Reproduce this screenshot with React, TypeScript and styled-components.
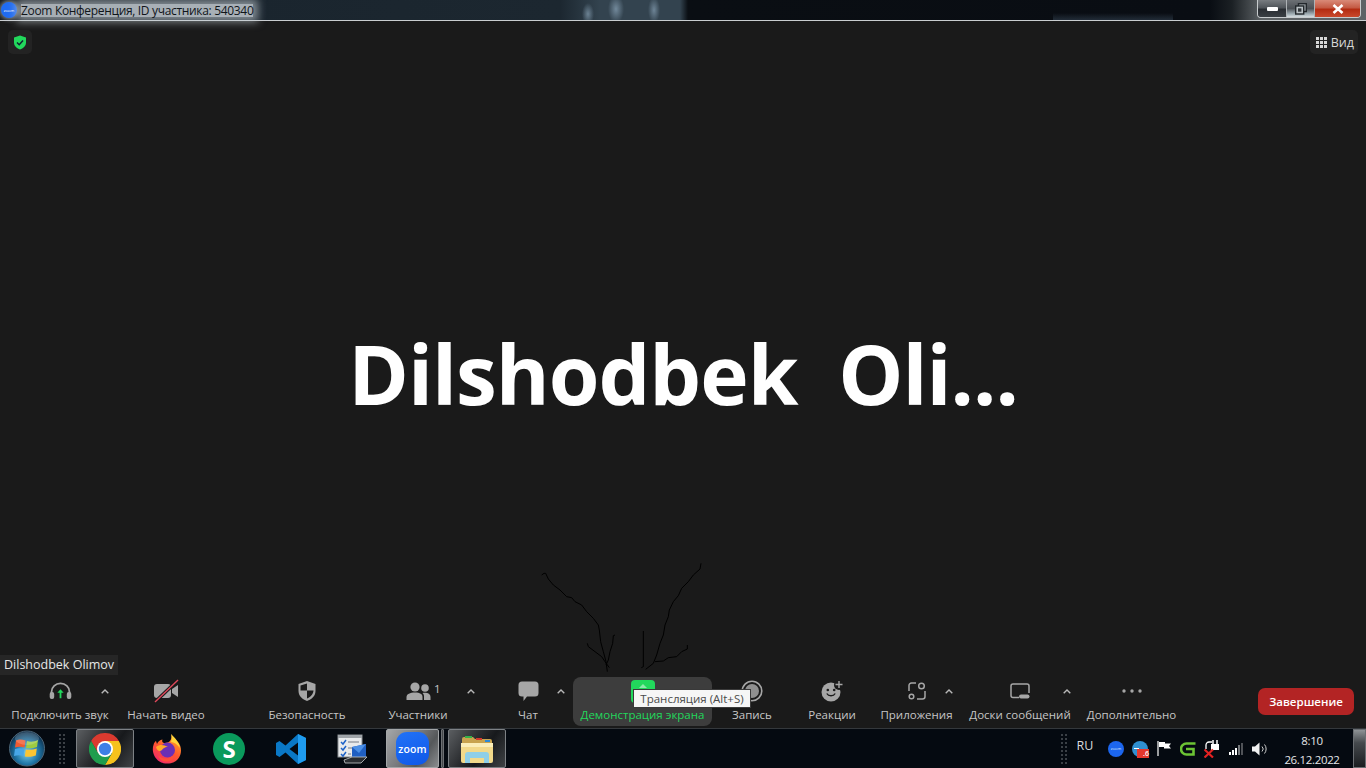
import React from 'react';
import styled, { createGlobalStyle, css } from 'styled-components';

const GRAY = '#a6a6a6';
const GREEN = '#22d85c';

const GlobalStyle = createGlobalStyle`
  html, body {
    margin: 0;
    height: 100%;
    overflow: hidden;
    background: #1a1a1a;
    font-family: "Open Sans", "Noto Sans", sans-serif;
  }
  #root { height: 100%; }
  svg { display: block; }
`;

const Page = styled.div`
  height: 100vh;
  display: flex;
  flex-direction: column;
`;

const TitleBar = styled.div`
  height: 20px;
  flex: none;
  display: flex;
  align-items: flex-start;
  justify-content: space-between;
  padding-right: 5px;
  border-bottom: 1px solid #c9cdd0;
  background:
    radial-gradient(ellipse 6px 11px at 588px 14px, rgba(135, 160, 180, 0.7), transparent),
    radial-gradient(ellipse 8px 14px at 616px 9px, rgba(135, 160, 180, 0.75), transparent),
    radial-gradient(ellipse 6px 13px at 654px 10px, rgba(135, 160, 180, 0.7), transparent),
    linear-gradient(180deg, transparent 13px, rgba(70, 90, 110, 0.4) 20px) 1053px 0 / 120px 100% no-repeat,
    linear-gradient(90deg,
      #10161c 0, #1a252e 240px, #1c2730 560px, #33434f 600px, #33434f 680px, #0a0e13 688px,
      #090d13 1210px, #1b2024 1232px, #5e6366 1262px);
`;

const WindowTitle = styled.div`
  display: flex;
  align-items: center;
  gap: 4px;
  height: 20px;
  padding-left: 1px;
`;

const AppBadge = styled.div`
  width: 16px;
  height: 16px;
  border-radius: 50%;
  background: #1f6bf2;
  box-shadow: 0 0 4px 2px rgba(200, 208, 214, 0.55);
  color: #fff;
  font-size: 4px;
  display: flex;
  align-items: center;
  justify-content: center;
`;

const TitleText = styled.span`
  font-size: 12px;
  letter-spacing: -0.027em;
  color: #10151a;
  white-space: nowrap;
  line-height: 13px;
  background: rgba(200, 208, 214, 0.82);
  box-shadow: 0 0 9px 5px rgba(200, 208, 214, 0.6);
`;

const WindowControls = styled.div`
  display: flex;
  height: 17px;
  border: 1px solid #c8ccce;
  border-top: none;
  border-radius: 0 0 4px 4px;
  overflow: hidden;
`;

const WinButton = styled.div<{ $w: number; $kind?: 'close' | 'restore' }>`
  width: ${(p) => p.$w}px;
  display: flex;
  align-items: center;
  justify-content: center;
  background: linear-gradient(180deg, #787c80 0, #50555a 45%, #2a2e33 55%, #3a3f44 100%);
  border-right: 1px solid #aeb2b5;
  ${(p) =>
    p.$kind === 'restore' &&
    css`
      background: linear-gradient(180deg, #6c7074 0, #4c5156 50%, #9aa7ad 80%, #d5dde0 100%);
    `}
  ${(p) =>
    p.$kind === 'close' &&
    css`
      border-right: none;
      background: linear-gradient(180deg, #d98a78 0, #c45a44 45%, #b32c12 55%, #c9492c 100%);
    `}
`;

const Stage = styled.main`
  flex: 1;
  position: relative;
  display: flex;
  align-items: center;
  justify-content: center;
  padding-top: 48px;
  box-sizing: border-box;
  min-height: 0;
`;

const BigName = styled.h1`
  margin: 0;
  font-family: "Open Sans", sans-serif;
  font-size: 82px;
  font-weight: 700;
  color: #fff;
  white-space: pre;
  line-height: 1;
  letter-spacing: -0.012em;
`;

const CornerTile = styled.div<{ $side: 'left' | 'right' }>`
  position: absolute;
  top: 9px;
  ${(p) =>
    p.$side === 'left'
      ? 'left: 8px; width: 24px; justify-content: center;'
      : 'right: 8px; width: 48px; justify-content: flex-end; padding-right: 4px; box-sizing: border-box;'}
  height: 24px;
  border-radius: 5px;
  background: #232323;
  display: flex;
  align-items: center;
  gap: 4px;
  color: #d8d8d8;
  font-size: 12.5px;
`;

const NameTag = styled.div`
  position: absolute;
  left: 0;
  bottom: 2px;
  height: 20px;
  width: 118px;
  box-sizing: border-box;
  padding-left: 4px;
  background: #262626;
  color: #e6e6e6;
  font-size: 12.5px;
  line-height: 20px;
  white-space: nowrap;
`;

const Scribble = styled.svg`
  position: absolute;
  left: 530px;
  top: 534px;
`;

const Toolbar = styled.nav`
  flex: none;
  height: 51px;
  display: flex;
  padding-left: 10px;
  position: relative;
`;

const Tool = styled.div<{ $w: number; $ml: number; $active?: boolean }>`
  position: relative;
  flex: none;
  box-sizing: border-box;
  width: ${(p) => p.$w}px;
  margin-left: ${(p) => p.$ml}px;
  height: 49px;
  display: flex;
  flex-direction: column;
  align-items: center;
  border-radius: 8px;
  color: ${(p) => (p.$active ? GREEN : '#c6c6c6')};
  background: ${(p) => (p.$active ? '#3d3d3d' : 'transparent')};
`;

const IconSlot = styled.div`
  height: 28px;
  display: flex;
  align-items: center;
  justify-content: center;
  position: relative;
`;

const ToolLabel = styled.span`
  font-size: 11.5px;
  line-height: 16px;
  margin-top: 2px;
  white-space: nowrap;
`;

const Caret = styled.svg<{ $x: number }>`
  position: absolute;
  left: ${(p) => p.$x}px;
  top: 12px;
`;

const Count = styled.span`
  position: absolute;
  left: 45px;
  top: 4px;
  font-size: 11.5px;
  color: #c6c6c6;
`;

const Tooltip = styled.div`
  position: absolute;
  left: 60px;
  top: 12px;
  width: 118px;
  height: 19px;
  box-sizing: border-box;
  background: #f6f6f6;
  border: 1px solid #3a3a3a;
  color: #4a4a4a;
  font-size: 11.5px;
  line-height: 17px;
  text-align: center;
  white-space: nowrap;
  z-index: 2;
`;

const EndButton = styled.button`
  margin-left: auto;
  margin-right: 12px;
  margin-top: 11px;
  width: 96px;
  height: 27px;
  border: none;
  border-radius: 7px;
  background: #b32424;
  color: #fff;
  font-family: inherit;
  font-size: 11.5px;
  font-weight: 600;
  padding: 0;
`;

const Taskbar = styled.footer`
  flex: none;
  height: 40px;
  box-sizing: border-box;
  border-top: 1px solid #34383c;
  background: #050a11;
  display: flex;
  align-items: stretch;
  padding-left: 9px;
`;

const Orb = styled.div`
  width: 36px;
  display: flex;
  align-items: center;
`;

const Gripper = styled.div<{ $ml: number }>`
  width: 8px;
  margin: 4px 0 4px ${(p) => p.$ml}px;
  background-image: radial-gradient(circle, #3b4046 0.8px, transparent 1px);
  background-size: 4px 4px;
`;

const TaskSlot = styled.div<{ $w: number; $ml?: number; $state?: 'open' | 'bright' }>`
  width: ${(p) => p.$w}px;
  margin-left: ${(p) => p.$ml ?? 0}px;
  box-sizing: border-box;
  display: flex;
  align-items: center;
  justify-content: center;
  ${(p) =>
    p.$state === 'open' &&
    css`
      border: 1px solid #7d8185;
      border-radius: 2px;
      background: linear-gradient(125deg, #5b5e61 0, #2b2d30 40%, #17191c 60%, #3f4245 100%);
    `}
  ${(p) =>
    p.$state === 'bright' &&
    css`
      border: 1px solid #a3a6a8;
      border-radius: 2px;
      background: linear-gradient(125deg, #a5a7a9 0, #77797c 45%, #55585a 70%, #8b8d8f 100%);
    `}
`;

const Sliver = styled.div`
  width: 3px;
  margin-left: 2px;
  border: 1px solid #6d7074;
  border-radius: 1px;
  background: #44474a;
  box-sizing: border-box;
`;

const ZoomTile = styled.div`
  width: 33px;
  height: 33px;
  border-radius: 11px;
  background: linear-gradient(160deg, #2272f7, #0f58e8);
  color: #fff;
  font-size: 10.5px;
  font-weight: 600;
  letter-spacing: 0.2px;
  display: flex;
  align-items: center;
  justify-content: center;
`;

const STile = styled.div`
  width: 32px;
  height: 32px;
  border-radius: 50%;
  background: #0a9a5c;
  color: #fff;
  font-size: 24px;
  font-weight: 700;
  line-height: 32px;
  text-align: center;
`;

const Tray = styled.div`
  margin-left: auto;
  display: flex;
  align-items: stretch;
`;

const Lang = styled.div`
  width: 24px;
  margin-left: 5px;
  text-align: center;
  color: #d8dadc;
  font-size: 12.5px;
  line-height: 34px;
`;

const TrayCell = styled.div<{ $first?: boolean }>`
  width: 24px;
  margin-left: ${(p) => (p.$first ? 7 : 0)}px;
  display: flex;
  align-items: center;
  justify-content: center;
  position: relative;
`;

const TrayZoom = styled.div`
  width: 16px;
  height: 16px;
  border-radius: 50%;
  background: #1c66ee;
  color: #dfe9ff;
  font-size: 4px;
  display: flex;
  align-items: center;
  justify-content: center;
`;

const TrayBlue = styled.div`
  width: 16px;
  height: 16px;
  border-radius: 50%;
  background: #2f8fd0;
  display: flex;
  align-items: center;

  &::before {
    content: '';
    width: 5px;
    height: 1px;
    margin-left: 2px;
    background: #fff;
  }
`;

const RedBadge = styled.span`
  position: absolute;
  right: 3px;
  bottom: 10px;
  width: 12px;
  height: 9px;
  background: #e5372c;
  color: #fff;
  font-size: 7px;
  line-height: 9px;
  text-align: right;
  font-weight: 600;
`;

const Clock = styled.div`
  width: 80px;
  box-sizing: border-box;
  padding-top: 2px;
  display: flex;
  flex-direction: column;
  align-items: center;
  justify-content: center;
  gap: 4px;
  color: #e4e6e8;
  font-size: 11.5px;
  line-height: 15px;
  letter-spacing: -0.03em;
`;

const ShowDesktop = styled.div`
  width: 13px;
  margin-left: 1px;
  box-sizing: border-box;
  border: 1px solid #6a6e72;
  background: linear-gradient(180deg, #8f9396 0, #45494d 35%, #1a1d20 100%);
`;

const CaretUp = ({ x }: { x: number }) => (
  <Caret $x={x} width="8" height="5" viewBox="0 0 8 5" fill="none" stroke="#b8b8b8" strokeWidth="1.4">
    <polyline points="0.7,4.3 4,1 7.3,4.3" />
  </Caret>
);

const AudioIcon = () => (
  <svg width="25" height="18" viewBox="0 0 26 20">
    <path d="M3 14 V11 A10 9.5 0 0 1 23 11 V14" fill="none" stroke={GRAY} strokeWidth="2" />
    <rect x="1" y="11" width="5" height="8" rx="2.2" fill={GRAY} />
    <rect x="20" y="11" width="5" height="8" rx="2.2" fill={GRAY} />
    <path d="M13 8 L16.5 12 H14 V18 H12 V12 H9.5 Z" fill={GREEN} />
  </svg>
);

const VideoOffIcon = () => (
  <svg width="26" height="24" viewBox="0 0 26 24">
    <rect x="1" y="5" width="17" height="14" rx="3" fill={GRAY} />
    <path d="M19 10 L25 6 V18 L19 14 Z" fill={GRAY} />
    <path d="M2 23 L25 1" stroke="#1a1a1a" strokeWidth="3.4" />
    <path d="M2 23 L25 1" stroke="#e0485a" strokeWidth="1.4" />
  </svg>
);

const SecurityIcon = () => (
  <svg width="20" height="22" viewBox="0 0 20 22">
    <path d="M10 1 L18.5 4 V11 C18.5 16 14.5 19.5 10 21 C5.5 19.5 1.5 16 1.5 11 V4 Z" fill={GRAY} />
    <path d="M10 3.5 V10.5 H3.5 V5.5 Z M10 10.5 H16.5 C16.2 14.5 13.2 17.2 10 18.5 Z" fill="#1a1a1a" />
  </svg>
);

const PeopleIcon = () => (
  <svg width="25" height="18" viewBox="0 0 25 18">
    <circle cx="9" cy="5" r="4.6" fill={GRAY} />
    <circle cx="19" cy="6" r="3.8" fill={GRAY} />
    <path d="M0.5 18 V15 C0.5 12 4 10.5 9 10.5 C14 10.5 16.5 12 16.5 15 V18 Z" fill={GRAY} />
    <path d="M18 18 V14.5 C18 13 17.5 12 16.5 11 C21 10.3 24.5 11.7 24.5 15 V18 Z" fill={GRAY} />
  </svg>
);

const ChatIcon = () => (
  <svg width="21" height="21" viewBox="0 0 21 21">
    <path d="M4 0.5 H17 A3.5 3.5 0 0 1 20.5 4 V12 A3.5 3.5 0 0 1 17 15.5 H9 L5.5 20 V15.5 H4 A3.5 3.5 0 0 1 0.5 12 V4 A3.5 3.5 0 0 1 4 0.5 Z" fill={GRAY} />
  </svg>
);

const ShareIcon = () => (
  <svg width="24" height="23" viewBox="0 0 24 23">
    <rect width="24" height="23" rx="4" fill={GREEN} />
    <path d="M12 4 L16 8 H8 Z" fill="#8be9a9" />
  </svg>
);

const RecordIcon = () => (
  <svg width="22" height="22" viewBox="0 0 22 22">
    <circle cx="11" cy="11" r="9.8" fill="none" stroke={GRAY} strokeWidth="1.6" />
    <circle cx="11" cy="11" r="7" fill="#8f8f8f" />
  </svg>
);

const ReactionIcon = () => (
  <svg width="23" height="22" viewBox="0 0 23 22">
    <circle cx="10" cy="12" r="9.5" fill={GRAY} />
    <circle cx="6.8" cy="10" r="1.3" fill="#1a1a1a" />
    <circle cx="13.2" cy="10" r="1.3" fill="#1a1a1a" />
    <path d="M5.8 13.5 C7.5 16.5 12.5 16.5 14.2 13.5" fill="none" stroke="#1a1a1a" strokeWidth="1.4" />
    <circle cx="18" cy="5" r="5" fill="#1a1a1a" />
    <path d="M18 1 V8 M14.5 4.5 H21.5" stroke={GRAY} strokeWidth="1.4" />
  </svg>
);

const AppsIcon = () => (
  <svg width="18" height="18" viewBox="0 0 18 18" fill="none" stroke={GRAY} strokeWidth="1.5">
    <path d="M8 1 H3.5 A2.5 2.5 0 0 0 1 3.5 V9" />
    <path d="M17 9 V14.5 A2.5 2.5 0 0 1 14.5 17 H9" />
    <circle cx="13.5" cy="4" r="2.8" />
    <circle cx="3.5" cy="14.5" r="2.3" />
  </svg>
);

const BoardIcon = () => (
  <svg width="20" height="17" viewBox="0 0 20 17">
    <path d="M9 14.5 H3 A2 2 0 0 1 1 12.5 V3 A2 2 0 0 1 3 1 H17 A2 2 0 0 1 19 3 V10" fill="none" stroke={GRAY} strokeWidth="1.5" />
    <rect x="9" y="11.5" width="10.5" height="4" rx="2" fill={GRAY} />
  </svg>
);

const MoreIcon = () => (
  <svg width="20" height="4" viewBox="0 0 20 4" fill={GRAY}>
    <circle cx="2" cy="2" r="1.7" />
    <circle cx="10" cy="2" r="1.7" />
    <circle cx="18" cy="2" r="1.7" />
  </svg>
);

const WindowsOrb = () => (
  <svg width="37" height="37" viewBox="0 0 36 36">
    <defs>
      <radialGradient id="orb" cx="50%" cy="62%" r="60%">
        <stop offset="0" stopColor="#7ed0ee" />
        <stop offset="0.55" stopColor="#1f75a6" />
        <stop offset="1" stopColor="#0c2c48" />
      </radialGradient>
    </defs>
    <circle cx="18" cy="18" r="17.5" fill="url(#orb)" stroke="#4d6678" />
    <path d="M7 10 C10 8.5 13 9 16.5 10 L15.5 17 C12.5 16 9.5 15.7 6 17 Z" fill="#ef5a30" />
    <path d="M18 10.5 C21 11.5 25 11.5 29 9.5 L28 16.5 C24 18 20 18 17 17.5 Z" fill="#9ccb42" />
    <path d="M6 18.5 C9.5 17.2 12.5 17.5 15.2 18.5 L14.2 25.5 C11.5 24.5 8.5 24.3 5 25.5 Z" fill="#47a6e8" />
    <path d="M16.8 19 C20 19.6 24 19.5 27.8 18 L26.8 25 C23 26.5 19 26.5 15.8 26 Z" fill="#fbc533" />
    <ellipse cx="18" cy="8" rx="12" ry="6.5" fill="#fff" opacity="0.18" />
  </svg>
);

const ChromeLogo = () => (
  <svg width="32" height="32" viewBox="-16 -16 32 32">
    <path d="M13.86,-8 A16,16 0 0 0 -13.86,-8 L-6.93,4 L0,0 L0,-8 Z" fill="#db3a2f" />
    <path d="M13.86,-8 A16,16 0 0 0 -13.86,-8 L-6.93,4 L0,0 L0,-8 Z" fill="#f6c21c" transform="rotate(120)" />
    <path d="M13.86,-8 A16,16 0 0 0 -13.86,-8 L-6.93,4 L0,0 L0,-8 Z" fill="#1f9d4d" transform="rotate(240)" />
    <circle r="8" fill="#fff" />
    <circle r="6.2" fill="#3d7fe6" />
  </svg>
);

const FirefoxLogo = () => (
  <svg width="32" height="32" viewBox="0 0 32 32">
    <defs>
      <linearGradient id="fox" x1="0.8" y1="0" x2="0.2" y2="1">
        <stop offset="0" stopColor="#ffb02a" />
        <stop offset="0.5" stopColor="#ff5a2c" />
        <stop offset="1" stopColor="#f0246e" />
      </linearGradient>
    </defs>
    <path d="M20 1 C21 4 24 6 27 9 C31 14 31 21 27 26 C23 31 14 32 8.5 28.5 C3 25 0.5 18 2.5 12 C3 10 4 8.5 5 8 L6 11 C7 8.5 9 7 11.5 6.5 C10.5 9 12 10 14 10 C19 10 21.5 6 20 1 Z" fill="url(#fox)" />
    <path d="M20 1 C24 5 28 9 29 15 C26 11 23 9 20 9 C21 6 21 3 20 1 Z" fill="#ffd43a" />
    <circle cx="16.5" cy="17" r="7.5" fill="#6b2fb5" />
    <path d="M5 14 C9 11 13 12 17 14 C13 14 12 16 11 17 C9 19 6 18 5 14 Z" fill="#ffa928" />
    <path d="M7 22 C11 27 20 27 24 20 C24 27 17 30 12 28 C9 27 8 25 7 22 Z" fill="#ff4f3a" />
  </svg>
);

const VSCodeLogo = () => (
  <svg width="32" height="32" viewBox="0 0 32 32">
    <path fillRule="evenodd" d="M23 1 L31 5 V27 L23 31 L10.5 19.5 L4.5 24 L1 22 V10 L4.5 8 L10.5 12.5 Z M23 9.5 L14.5 16 L23 22.5 Z" fill="#0a78c6" />
    <path d="M23 1 L31 5 V27 L23 31 Z" fill="#1f9cf0" />
  </svg>
);

const TasksIcon = () => (
  <svg width="32" height="32" viewBox="0 0 32 32">
    <rect x="1" y="2" width="24" height="22" fill="#e8eaec" stroke="#8b8f94" />
    <rect x="1" y="2" width="24" height="3" fill="#9ea3a8" />
    <path d="M4 9 L6 11 L9 7 M4 15 L6 17 L9 13 M4 21 L6 23 L9 19" fill="none" stroke="#1e62c8" strokeWidth="1.5" />
    <path d="M11 9 H22 M11 15 H16 M11 21 H14" stroke="#9aa0a6" strokeWidth="1.5" />
    <path d="M15 14 L29 11 V24 L15 27 Z" fill="#1f5fc2" />
    <path d="M15 14 L29 11 L22 20 Z" fill="#4b8fe6" />
    <path d="M7 27 L15 24 L30 24 L24 30 H8 Z" fill="#2a2d31" stroke="#c7cacc" strokeWidth="0.8" />
  </svg>
);

const FolderIcon = () => (
  <svg width="34" height="30" viewBox="0 0 34 30">
    <path d="M2 5 A2 2 0 0 1 4 3 H13 L15 5 H30 A2 2 0 0 1 32 7 V10 H2 Z" fill="#c8a34e" />
    <rect x="5" y="2" width="7" height="2" fill="#35b04a" />
    <rect x="16" y="4" width="6" height="2" fill="#d33a2c" />
    <rect x="25" y="6" width="5" height="2" fill="#2d8ad6" />
    <rect x="1" y="9" width="32" height="20" rx="2" fill="#f2d98a" />
    <path d="M1 9 H33 V13 H1 Z" fill="#fbeeb8" />
    <path d="M5 29 V21 A3 3 0 0 1 8 18 H26 A3 3 0 0 1 29 21 V29 H24 V24 H10 V29 Z" fill="#8fcfe8" />
  </svg>
);

const FlagIcon = () => (
  <svg width="14" height="15" viewBox="0 0 14 15">
    <path d="M1 0 V15" stroke="#fff" strokeWidth="1.2" />
    <path d="M2 1 H8 V2.5 H14 L12 5 L14 7.5 H7 V6 H2 Z" fill="#fff" />
  </svg>
);

const GIcon = () => (
  <svg width="16" height="14" viewBox="0 0 16 14" fill="none" stroke="#6cc434" strokeWidth="2.6">
    <path d="M15.5 1.5 H6.5 A5 5 0 0 0 6.5 12.5 H13.5 V7 H6" />
  </svg>
);

const PlugIcon = () => (
  <svg width="16" height="18" viewBox="0 0 16 18">
    <path d="M2 9 V5 A3 3 0 0 1 5 2 H8" fill="none" stroke="#fff" strokeWidth="1.3" />
    <rect x="7" y="4" width="8" height="6" fill="#fff" />
    <path d="M9 0 V4 M13 0 V4" stroke="#fff" strokeWidth="1.5" />
    <path d="M0.5 9.5 L9 17.5 M9 9.5 L0.5 17.5" stroke="#e32222" strokeWidth="2.2" />
  </svg>
);

const SignalIcon = () => (
  <svg width="14" height="12" viewBox="0 0 14 12" fill="#fff">
    <rect x="0" y="9" width="2" height="3" />
    <rect x="3" y="7" width="2" height="5" />
    <rect x="6" y="5" width="2" height="7" />
    <rect x="9" y="2" width="2" height="10" opacity="0.45" />
    <rect x="12" y="0" width="2" height="12" opacity="0.3" />
  </svg>
);

const SpeakerIcon = () => (
  <svg width="16" height="14" viewBox="0 0 16 14">
    <path d="M0 4.5 H3 L7.5 0.5 V13.5 L3 9.5 H0 Z" fill="#f2f2f2" />
    <path d="M10 4.5 A3.5 3.5 0 0 1 10 9.5 M12.5 2.5 A7 7 0 0 1 12.5 11.5" fill="none" stroke="#d0d0d0" strokeWidth="1" />
  </svg>
);

const scribbles = [
  '35,60 42,55 47,55 55,72 70,90 90,105 110,125 125,128 135,140 155,150 170,170 190,190 205,210 208,225 212,260 220,290 228,320 232,350',
  '172,265 175,275 195,290 215,305 225,320 238,338',
  '255,240 250,242 248,265 240,290 235,315 228,330',
  '340,228 340,335 334,338',
  '513,25 510,42 490,60 475,80 455,100 445,122 430,140 418,165 415,185 405,210 400,240 390,265 380,300 370,325 347,343',
  '472,270 472,282 455,290 440,305 415,308 400,318 375,320',
];

export default function App() {
  return (
    <Page>
      <GlobalStyle />
      <TitleBar>
        <WindowTitle>
          <AppBadge>zoom</AppBadge>
          <TitleText>Zoom Конференция, ID участника: 540340</TitleText>
        </WindowTitle>
        <WindowControls>
          <WinButton $w={28}>
            <svg width="11" height="4" viewBox="0 0 11 4">
              <rect width="11" height="4" rx="1" fill="#fff" />
            </svg>
          </WinButton>
          <WinButton $w={27} $kind="restore">
            <svg width="12" height="12" viewBox="0 0 12 12" fill="none" stroke="#23282c" strokeWidth="1.4">
              <rect x="3.5" y="0.7" width="7.8" height="7.8" fill="#9da4a8" />
              <rect x="0.7" y="3" width="8" height="8" fill="#b9c0c4" />
              <rect x="3" y="5.3" width="3.4" height="3.4" fill="#34393d" stroke="none" />
            </svg>
          </WinButton>
          <WinButton $w={45} $kind="close">
            <svg width="12" height="10" viewBox="0 0 12 10">
              <path d="M1.5 1 L10.5 9 M10.5 1 L1.5 9" stroke="#fff" strokeWidth="2.6" />
            </svg>
          </WinButton>
        </WindowControls>
      </TitleBar>

      <Stage>
        <CornerTile $side="left">
          <svg width="14" height="15" viewBox="0 0 14 15">
            <path d="M7 0.5 L13 2.5 V7.5 C13 11 10 13.5 7 14.5 C4 13.5 1 11 1 7.5 V2.5 Z" fill={GREEN} />
            <path d="M4 7.5 L6.2 9.7 L10 5.5" fill="none" stroke="#123" strokeWidth="1.5" />
          </svg>
        </CornerTile>
        <CornerTile $side="right">
          <svg width="11" height="11" viewBox="0 0 11 11" fill="#d8d8d8">
            {[0, 4, 8].map((y) =>
              [0, 4, 8].map((x) => <rect key={`${x}-${y}`} x={x} y={y} width="3" height="3" />),
            )}
          </svg>
          <span>Вид</span>
        </CornerTile>
        <BigName>{'Dilshodbek  Oli...'}</BigName>
        <Scribble width="190" height="125" viewBox="0 0 570 375" fill="none" stroke="#000" strokeWidth="3">
          {scribbles.map((pts) => (
            <polyline key={pts} points={pts} />
          ))}
        </Scribble>
        <NameTag>Dilshodbek Olimov</NameTag>
      </Stage>

      <Toolbar>
        <Tool $w={100} $ml={0}>
          <IconSlot><AudioIcon /></IconSlot>
          <ToolLabel>Подключить звук</ToolLabel>
          <CaretUp x={91} />
        </Tool>
        <Tool $w={76} $ml={18}>
          <IconSlot><VideoOffIcon /></IconSlot>
          <ToolLabel>Начать видео</ToolLabel>
        </Tool>
        <Tool $w={76} $ml={65}>
          <IconSlot><SecurityIcon /></IconSlot>
          <ToolLabel>Безопасность</ToolLabel>
        </Tool>
        <Tool $w={58} $ml={44}>
          <IconSlot><PeopleIcon /></IconSlot>
          <ToolLabel>Участники</ToolLabel>
          <Count>1</Count>
          <CaretUp x={78} />
        </Tool>
        <Tool $w={20} $ml={71}>
          <IconSlot><ChatIcon /></IconSlot>
          <ToolLabel>Чат</ToolLabel>
          <CaretUp x={39} />
        </Tool>
        <Tool $w={139} $ml={35} $active>
          <IconSlot><ShareIcon /></IconSlot>
          <ToolLabel>Демонстрация экрана</ToolLabel>
          <Tooltip>Трансляция (Alt+S)</Tooltip>
        </Tool>
        <Tool $w={40} $ml={20}>
          <IconSlot><RecordIcon /></IconSlot>
          <ToolLabel>Запись</ToolLabel>
        </Tool>
        <Tool $w={46} $ml={37}>
          <IconSlot><ReactionIcon /></IconSlot>
          <ToolLabel>Реакции</ToolLabel>
        </Tool>
        <Tool $w={73} $ml={25}>
          <IconSlot><AppsIcon /></IconSlot>
          <ToolLabel>Приложения</ToolLabel>
          <CaretUp x={65} />
        </Tool>
        <Tool $w={102} $ml={16}>
          <IconSlot><BoardIcon /></IconSlot>
          <ToolLabel>Доски сообщений</ToolLabel>
          <CaretUp x={94} />
        </Tool>
        <Tool $w={89} $ml={16}>
          <IconSlot><MoreIcon /></IconSlot>
          <ToolLabel>Дополнительно</ToolLabel>
        </Tool>
        <EndButton>Завершение</EndButton>
      </Toolbar>

      <Taskbar>
        <Orb><WindowsOrb /></Orb>
        <Gripper $ml={13} />
        <TaskSlot $w={58} $ml={10} $state="open"><ChromeLogo /></TaskSlot>
        <TaskSlot $w={62} $ml={2}><FirefoxLogo /></TaskSlot>
        <TaskSlot $w={62}><STile>S</STile></TaskSlot>
        <TaskSlot $w={62}><VSCodeLogo /></TaskSlot>
        <TaskSlot $w={62}><TasksIcon /></TaskSlot>
        <TaskSlot $w={53} $ml={2} $state="bright"><ZoomTile>zoom</ZoomTile></TaskSlot>
        <Sliver />
        <TaskSlot $w={58} $ml={4} $state="open"><FolderIcon /></TaskSlot>
        <Tray>
          <Gripper $ml={0} />
          <Lang>RU</Lang>
          <TrayCell $first><TrayZoom>zoom</TrayZoom></TrayCell>
          <TrayCell><TrayBlue /><RedBadge>.6</RedBadge></TrayCell>
          <TrayCell><FlagIcon /></TrayCell>
          <TrayCell><GIcon /></TrayCell>
          <TrayCell><PlugIcon /></TrayCell>
          <TrayCell><SignalIcon /></TrayCell>
          <TrayCell><SpeakerIcon /></TrayCell>
          <Clock>
            <span>8:10</span>
            <span>26.12.2022</span>
          </Clock>
          <ShowDesktop />
        </Tray>
      </Taskbar>
    </Page>
  );
}
